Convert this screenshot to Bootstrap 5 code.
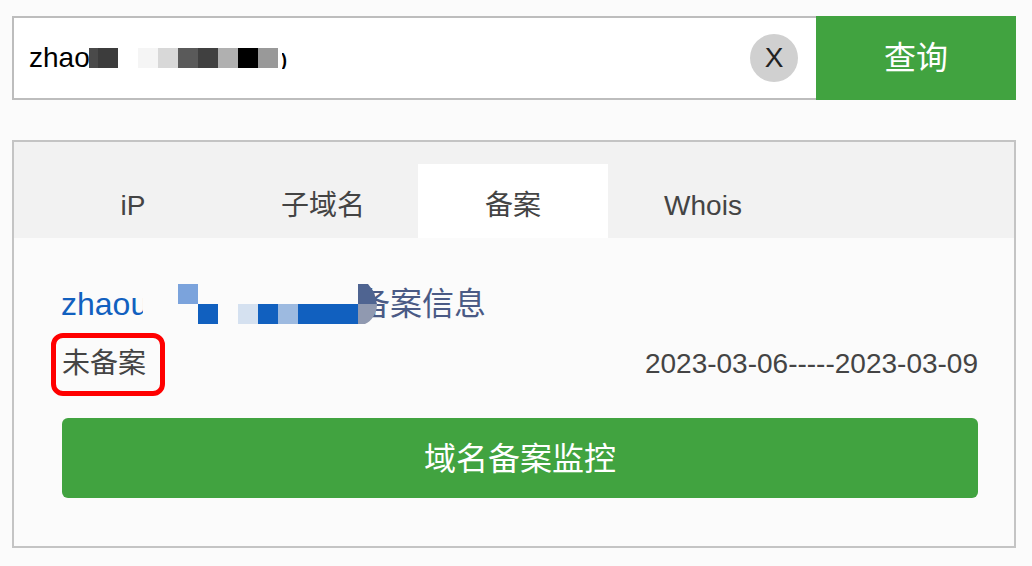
<!DOCTYPE html>
<html lang="zh-CN">
<head>
<meta charset="utf-8">
<title>备案查询</title>
<link href="https://cdn.jsdelivr.net/npm/bootstrap@5.3.0/dist/css/bootstrap.min.css" rel="stylesheet">
<style>
html,body{height:100%;overflow:hidden}
body{background:#fbfbfb;font-family:"Liberation Sans","Noto Sans CJK SC",sans-serif;color:#444;font-size:28px;padding:16px 16px 0 12px}
.search-row{height:84px;margin-bottom:40px}
.search-box{border:2px solid #bdbdbd;border-right:0;background:#fff;padding-left:15px;padding-right:18px;color:#000}
.clip-a{width:60px;overflow:hidden;white-space:nowrap;flex:none}
.frag{width:6px;overflow:hidden;flex:none;font-size:18px;line-height:18px;margin-top:4px;text-indent:-1px;font-weight:700}
.mosaic{display:block;flex:none}
.clear-btn{width:48px;height:48px;background:#d0d0d0;color:#222;font-size:28px;line-height:48px;text-align:center;padding:0;border:0;border-radius:50%}
.query-btn,.query-btn:hover{width:200px;background:#41a340;color:#fff;font-size:32px;border:0;border-radius:0;padding:0}
.result-box{height:408px;border:2px solid #c4c4c4;border-radius:0;background:#fbfbfb;color:#444}
.tab-strip{height:96px;background:#f2f2f2;padding:22px 0 0 24px;border:0;flex-wrap:nowrap}
.tab-item{width:190px;height:74px;line-height:84px;text-align:center;color:#444;font-size:28px;padding:0}
.tab-item.active,.tab-item.active:hover{background:#fff;color:#444}
.tab-item:hover{color:#444}
.result-body{padding:46px 36px 0 48px;position:relative}
.title-row{height:40px;line-height:40px;font-size:32px;color:#4a5a85;margin-bottom:20px}
.clip-b{width:82px;margin-left:-1px;overflow:hidden;white-space:nowrap;color:#1160bf;flex:none}
.mosaic-b{position:relative;margin-right:-20px;z-index:1}
.info-row{height:40px;line-height:40px;margin-bottom:34px}
.record-mark{position:absolute;left:37px;top:95px;width:114px;height:63px;border:5px solid #f00;border-radius:12px;pointer-events:none}
.watch-btn,.watch-btn:hover{height:80px;background:#41a340;color:#fff;font-size:32px;border:0;border-radius:6px;padding:1px 0 0}
</style>
</head>
<body>
<div class="search-row d-flex">
  <div class="search-box flex-grow-1 d-flex align-items-center">
    <span class="clip-a">zhao</span>
    <svg class="mosaic" width="193" height="20" viewBox="0 0 193 20" aria-hidden="true">
      <rect x="-1" width="10" height="20" fill="#4a4a4a"/>
      <rect x="9" width="20" height="20" fill="#3c3c3c"/>
      <rect x="49" width="20" height="20" fill="#f5f5f5"/>
      <rect x="69" width="20" height="20" fill="#d8d8d8"/>
      <rect x="89" width="20" height="20" fill="#5a5a5a"/>
      <rect x="109" width="20" height="20" fill="#404040"/>
      <rect x="129" width="20" height="20" fill="#b0b0b0"/>
      <rect x="149" width="20" height="20" fill="#000"/>
      <rect x="169" width="20" height="20" fill="#999"/>
    </svg>
    <span class="frag">)</span>
    <button type="button" class="clear-btn ms-auto">X</button>
  </div>
  <button type="button" class="btn query-btn">查询</button>
</div>

<div class="card result-box">
  <ul class="nav tab-strip">
    <li class="nav-item"><a class="nav-link tab-item" href="#">iP</a></li>
    <li class="nav-item"><a class="nav-link tab-item" href="#">子域名</a></li>
    <li class="nav-item"><a class="nav-link tab-item active" href="#">备案</a></li>
    <li class="nav-item"><a class="nav-link tab-item" href="#">Whois</a></li>
  </ul>
  <div class="result-body">
    <div class="title-row d-flex">
      <span class="clip-b">zhaou</span>
      <svg class="mosaic mosaic-b" width="235" height="40" viewBox="0 0 235 40" aria-hidden="true">
        <rect x="35" y="0" width="20" height="20" fill="#7ba3dc"/>
        <rect x="55" y="20" width="20" height="20" fill="#1160bf"/>
        <rect x="95" y="20" width="20" height="20" fill="#d5e1f0"/>
        <rect x="115" y="20" width="20" height="20" fill="#1160bf"/>
        <rect x="135" y="20" width="20" height="20" fill="#9dbae0"/>
        <rect x="155" y="20" width="60" height="20" fill="#1160bf"/>
        <path d="M215 0h10l6 8 3 12h-19z" fill="#4f6491"/>
        <path d="M215 20h19q0 8-4 13-3 5-8 7h-7z" fill="#9099b0"/>
      </svg>
      <span>备案信息</span>
    </div>
    <div class="info-row d-flex justify-content-between">
      <span>未备案</span>
      <span>2023-03-06-----2023-03-09</span>
    </div>
    <div class="record-mark"></div>
    <button type="button" class="btn watch-btn w-100 d-block">域名备案监控</button>
  </div>
</div>
<script src="https://cdn.jsdelivr.net/npm/bootstrap@5.3.0/dist/js/bootstrap.bundle.min.js"></script>
</body>
</html>
